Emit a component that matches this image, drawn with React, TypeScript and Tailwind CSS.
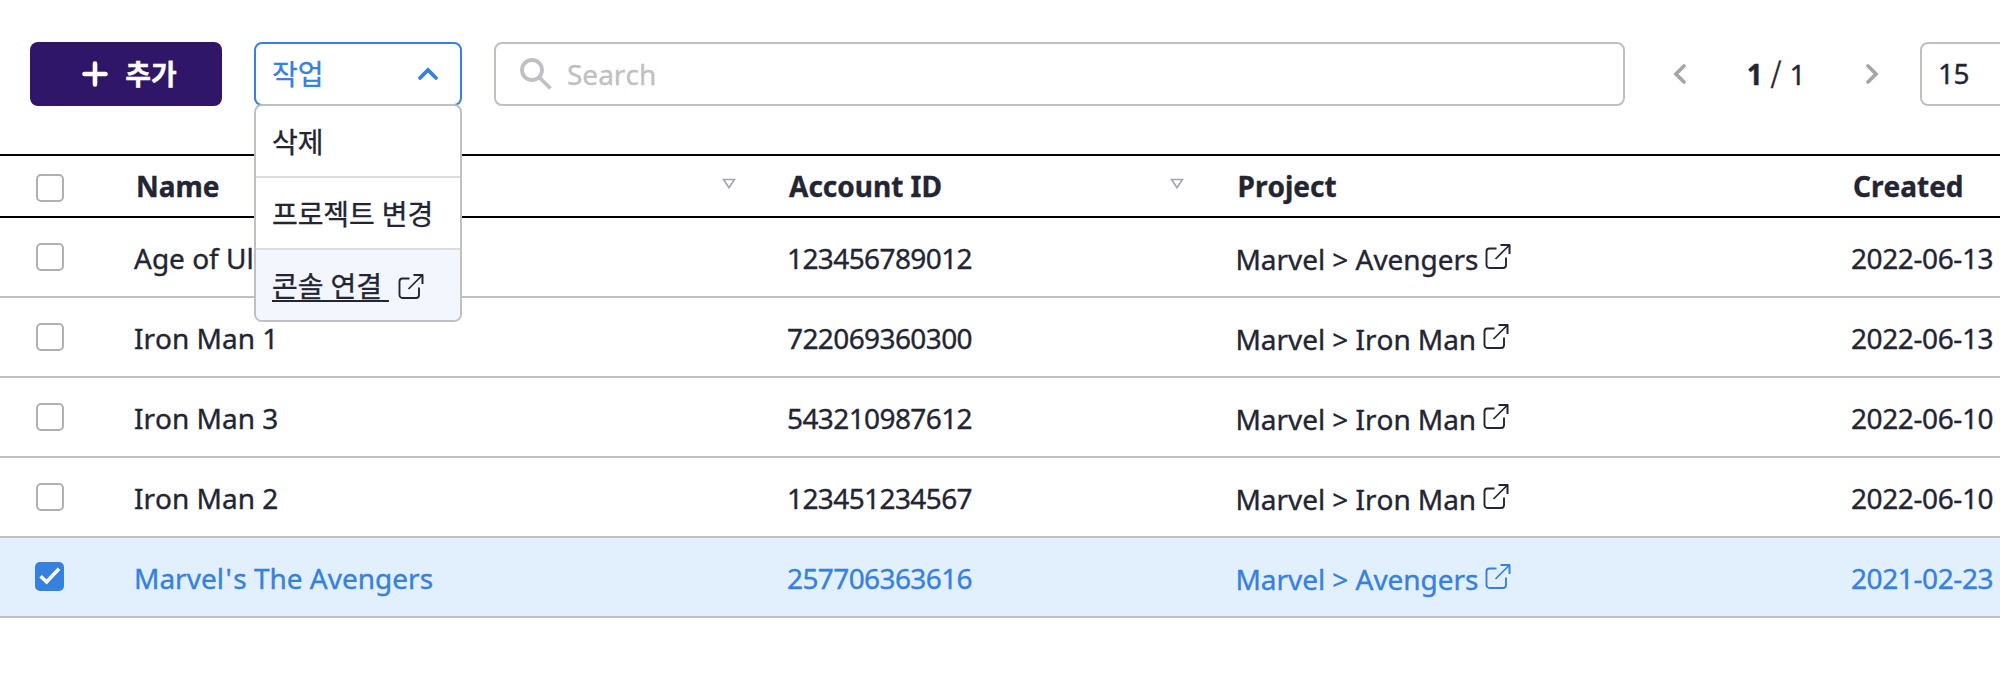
import React from 'react';

const GRID = 'grid grid-cols-[102px_652px_448px_616px_1fr] items-center';

function ExternalIcon({ className }: { className?: string }) {
  return (
    <svg className={className} width="28" height="28" viewBox="0 0 28 28" fill="none" stroke="currentColor" strokeWidth="1.9">
      <path d="M13.5 5.5H6.5a3 3 0 0 0-3 3V22a3 3 0 0 0 3 3H20a3 3 0 0 0 3-3V14.5" />
      <path d="M17.5 2H27M26.5 1.5V11" strokeWidth="2" />
      <path d="M26 2.5L12.5 16" strokeWidth="1.7" />
    </svg>
  );
}

function Checkbox({ checked = false, className = '' }: { checked?: boolean; className?: string }) {
  if (checked) {
    return (
      <span className={`-mt-px ml-[35px] flex size-[29px] items-center justify-center rounded-[5px] bg-[#3680e0] ${className}`}>
        <svg width="29" height="29" viewBox="0 0 29 29" fill="none" stroke="#ffffff" strokeWidth="3.6">
          <path d="M5.6 14.2L11.6 20L24 6.8" />
        </svg>
      </span>
    );
  }
  return <span className={`ml-9 block size-7 rounded-[5px] border-2 border-[#b0afb8] bg-white ${className}`} />;
}

function SortIcon() {
  return (
    <svg className="mr-[18px] -mt-1" width="14" height="12" viewBox="0 0 14 12" fill="none" stroke="#a6a5ae" strokeWidth="1.7">
      <path d="M1.6 1.5H12.4L7 9.8Z" />
    </svg>
  );
}

const rows = [
  { name: 'Age of Ultron', account: '123456789012', project: 'Marvel > Avengers', created: '2022-06-13' },
  { name: 'Iron Man 1', account: '722069360300', project: 'Marvel > Iron Man', created: '2022-06-13' },
  { name: 'Iron Man 3', account: '543210987612', project: 'Marvel > Iron Man', created: '2022-06-10' },
  { name: 'Iron Man 2', account: '123451234567', project: 'Marvel > Iron Man', created: '2022-06-10' },
  { name: "Marvel's The Avengers", account: '257706363616', project: 'Marvel > Avengers', created: '2021-02-23', selected: true },
];

function Name({ text }: { text: string }) {
  const [head, tail] = text.split("'");
  if (tail === undefined) return <>{text}</>;
  return (
    <>
      {head}
      <span className="ml-[1.6px] mr-[1.4px]">'</span>
      {tail}
    </>
  );
}

function ActionMenu() {
  return (
    <div className="relative w-[208px] shrink-0">
      <button className="flex h-16 w-full items-center justify-between rounded-lg border-2 border-[#3680e0] bg-white pl-4 pr-[21px] text-[#3680e0]">
        <span className="-mt-px">작업</span>
        <svg width="22" height="14" viewBox="0 0 22 14" fill="none" stroke="currentColor" strokeWidth="3.8" strokeLinecap="round" strokeLinejoin="miter">
          <path d="M3 11L11 3L19 11" />
        </svg>
      </button>
      <ul className="absolute left-0 top-[62px] z-10 w-[208px] overflow-hidden rounded-lg border-2 border-[#bfbfc6] bg-white">
        <li className="flex h-[72px] items-center border-b-2 border-[#dddddf] pl-4 pt-0.5">삭제</li>
        <li className="flex h-[72px] items-center border-b-2 border-[#dddddf] pl-4 pt-0.5 whitespace-nowrap">프로젝트 변경</li>
        <li className="flex h-[70px] items-center bg-[#f3f6fc] pl-4 pt-0.5">
          <span className="whitespace-pre underline decoration-2 underline-offset-[3px]">콘솔 연결 </span>
          <ExternalIcon className="ml-[7px] mt-0.5" />
        </li>
      </ul>
    </div>
  );
}

export default function App() {
  return (
    <main className="h-[694px] w-full overflow-hidden bg-white font-['Noto_Sans','Noto_Sans_CJK_KR',sans-serif] text-[28px] leading-10 tracking-[-0.1px] [-webkit-text-stroke:0.35px_currentColor] [font-kerning:none] text-[#232533]">
      <div className="flex h-[154px] items-start gap-8 pl-[30px] pt-[42px]">
        <button className="flex h-16 w-48 shrink-0 items-center justify-center gap-[17px] rounded-lg bg-[#2f1668] pl-[7px] font-bold text-white">
          <svg width="26" height="26" viewBox="0 0 26 26" fill="none" stroke="currentColor" strokeWidth="4.6" strokeLinecap="round">
            <path d="M13 2.5V23.5M2.5 13H23.5" />
          </svg>
          <span>추가</span>
        </button>
        <ActionMenu />
        <div className="flex h-16 w-[1131px] shrink-0 items-center rounded-lg border-2 border-[#bfbfc6] pl-6 text-[#bfbfc6]">
          <svg width="32" height="32" viewBox="0 0 32 32" fill="none" stroke="currentColor" strokeWidth="3.8">
            <circle cx="12" cy="12" r="10" />
            <path d="M19.5 19.5L30.5 30.5" />
          </svg>
          <span className="ml-[15px] tracking-normal">Search</span>
        </div>
        <div className="flex h-16 w-[231px] shrink-0 items-center justify-between pl-[15px] pr-[8px]">
          <svg width="16" height="22" viewBox="0 0 16 22" fill="none" stroke="#a6a5ae" strokeWidth="3.8" strokeLinecap="round">
            <path d="M12 3L4 11L12 19" />
          </svg>
          <span className="flex items-center whitespace-pre">
            <b>1</b>
            <span className="-mt-1.5 mx-[8px] font-['Noto_Sans_CJK_KR',sans-serif] text-[28px]">/</span>1
          </span>
          <svg width="16" height="22" viewBox="0 0 16 22" fill="none" stroke="#a6a5ae" strokeWidth="3.8" strokeLinecap="round">
            <path d="M4 3L12 11L4 19" />
          </svg>
        </div>
        <div className="flex h-16 w-40 shrink-0 items-center rounded-lg border-2 border-[#bfbfc6] pb-0.5 pl-4 tracking-[-0.6px]">15</div>
      </div>

      <div className={`${GRID} h-16 border-y-2 border-black font-bold tracking-normal`}>
        <Checkbox className="mt-1" />
        <div className="flex items-center justify-between pl-[34px]">Name<SortIcon /></div>
        <div className="flex items-center justify-between pl-[35px]">Account ID<SortIcon /></div>
        <div className="pl-[35.5px]">Project</div>
        <div className="pl-[35px]">Created</div>
      </div>

      {rows.map((row) => (
        <div
          key={row.name}
          className={`${GRID} h-20 border-b-2 border-[#bfbfc6] ${row.selected ? 'bg-[#e2f0fe] text-[#3680e0]' : ''}`}
        >
          <Checkbox checked={row.selected} />
          <div className="pl-8 pt-0.5 tracking-normal"><Name text={row.name} /></div>
          <div className="pl-[33px] pt-0.5 tracking-[-0.6px]">{row.account}</div>
          <div className="flex items-center pl-[33.5px] pt-[3px] tracking-[-0.05px]">
            {row.project}
            <ExternalIcon className="-mt-[3px] ml-[4.5px]" />
          </div>
          <div className="pl-[33px] pt-0.5 tracking-[-0.4px]">{row.created}</div>
        </div>
      ))}
    </main>
  );
}
